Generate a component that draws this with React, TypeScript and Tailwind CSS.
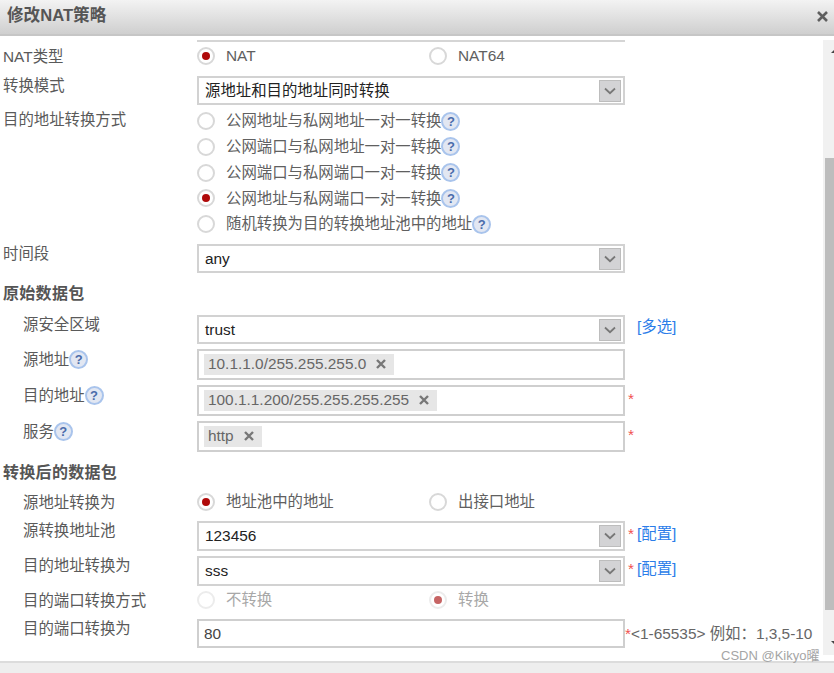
import type { ReactNode } from 'react';

function Help() {
  return (
    <span className="inline-flex h-[19px] w-[19px] shrink-0 items-center justify-center rounded-full border-2 border-[#a9c4ec] bg-[#e2e7f2] text-[13px] font-bold leading-none text-[#4a6cab]">
      ?
    </span>
  );
}

function Radio({ label, checked, disabled, help }: { label: string; checked?: boolean; disabled?: boolean; help?: boolean }) {
  return (
    <div className="flex h-6 items-center">
      <span className={`flex h-[18px] w-[18px] shrink-0 items-center justify-center rounded-full border-2 bg-white ${disabled ? 'border-[#ececec]' : 'border-[#d8d8d8]'}`}>
        {checked && <span className={`h-2 w-2 rounded-full ${disabled ? 'bg-[#c66464]' : 'bg-[#b00a0a]'}`} />}
      </span>
      <span className={`ml-[11px] ${disabled ? 'text-[#a8a8a8]' : 'text-[#606060]'}`}>{label}</span>
      {help && <Help />}
    </div>
  );
}

function Label({ text, sub, help }: { text: string; sub?: boolean; help?: boolean }) {
  return (
    <div className={`mt-px flex w-[197px] shrink-0 items-center leading-[18px] text-[#5a5a5a] ${sub ? 'pl-[23px]' : 'pl-[3px]'}`}>
      {text}
      {help && <Help />}
    </div>
  );
}

function Select({ value, className }: { value: string; className: string }) {
  return (
    <div className={`flex w-[428px] items-center justify-between border-2 border-[#d2d2d2] pl-[6px] pr-[2px] text-[#222] ${className}`}>
      <span>{value}</span>
      <span className="flex h-[22px] w-[22px] items-center justify-center border border-[#bdbdbd] bg-[#d3d3d5]">
        <svg width="12" height="8" viewBox="0 0 12 8" fill="none" stroke="#777" strokeWidth="1.8">
          <path d="M1 1.5 6 6.2 11 1.5" />
        </svg>
      </span>
    </div>
  );
}

function TagBox({ tag }: { tag: string }) {
  return (
    <div className="flex h-[31px] w-[428px] items-center border-2 border-[#cfcfcf] pl-[5px]">
      <span className="-mt-px flex h-[21px] items-center bg-[#e6e6e6] px-1 text-[#666]">
        {tag}
        <svg className="ml-[10px] mr-[4px]" width="10" height="10" viewBox="0 0 10 10" stroke="#777" strokeWidth="2.4">
          <path d="M1 1 9 9M9 1 1 9" />
        </svg>
      </span>
    </div>
  );
}

function Row({ children, className }: { children: ReactNode; className: string }) {
  return <div className={`flex items-start ${className}`}>{children}</div>;
}

function Star() {
  return <span className="ml-[3px] text-[#f0524f]">*</span>;
}

function Link({ text }: { text: string }) {
  return <span className="ml-[3px] text-[#2b7de9]">{text}</span>;
}

export default function App() {
  return (
    <div className="relative flex h-[673px] w-[834px] flex-col overflow-hidden bg-white font-['Liberation_Sans','Noto_Sans_CJK_SC',sans-serif] text-[15.4px]">
      {/* Title bar */}
      <div className="flex h-[36px] shrink-0 items-center justify-between border-b-2 border-[#c6c6c6] bg-gradient-to-b from-[#f3f3f3] to-[#cfcfcf] pb-[2px] pl-[7px] pr-[6px]">
        <span className="text-[16.6px] font-bold text-[#555]">修改NAT策略</span>
        <svg width="11" height="11" viewBox="0 0 11 11" stroke="#5f5f5f" strokeWidth="2.6">
          <path d="M1 1 10 10M10 1 1 10" />
        </svg>
      </div>

      <div className="flex min-h-0 flex-1">
        {/* Form */}
        <div className="min-w-0 flex-1">
          <div className="ml-[197px] mt-[4px] h-[2px] w-[428px] bg-[#d5d5d5]" />

          <Row className="mt-[2px] h-6 !items-center">
            <Label text="NAT类型" />
            <div className="w-[232px]"><Radio label="NAT" checked /></div>
            <Radio label="NAT64" />
          </Row>

          <Row className="mt-2">
            <Label text="转换模式" />
            <Select value="源地址和目的地址同时转换" className="h-[29px]" />
          </Row>

          <Row className="mt-1">
            <div className="mt-px"><Label text="目的地址转换方式" /></div>
            <div className="flex flex-col gap-[1.75px]">
              <Radio label="公网地址与私网地址一对一转换" help />
              <Radio label="公网端口与私网地址一对一转换" help />
              <Radio label="公网端口与私网端口一对一转换" help />
              <Radio label="公网地址与私网端口一对一转换" checked help />
              <Radio label="随机转换为目的转换地址池中的地址" help />
            </div>
          </Row>

          <Row className="mt-2">
            <Label text="时间段" />
            <Select value="any" className="h-[29px]" />
          </Row>

          <div className="mt-[10px] h-5 pl-[3px] text-[16px] font-bold leading-[22px] tracking-[0.3px] text-[#555]">原始数据包</div>

          <Row className="mt-3">
            <Label text="源安全区域" sub />
            <Select value="trust" className="h-[29px]" />
            <span className="ml-3 text-[#2b7de9]">[多选]</span>
          </Row>

          <Row className="mt-[5px]">
            <Label text="源地址" sub help />
            <TagBox tag="10.1.1.0/255.255.255.0" />
          </Row>

          <Row className="mt-[5px]">
            <Label text="目的地址" sub help />
            <TagBox tag="100.1.1.200/255.255.255.255" />
            <span className="mt-[2px]"><Star /></span>
          </Row>

          <Row className="mt-[5px]">
            <Label text="服务" sub help />
            <TagBox tag="http" />
            <span className="mt-[2px]"><Star /></span>
          </Row>

          <div className="mt-[10px] h-5 pl-[3px] text-[16px] font-bold leading-[22px] tracking-[0.3px] text-[#555]">转换后的数据包</div>

          <Row className="mt-2 h-6 !items-center">
            <Label text="源地址转换为" sub />
            <div className="w-[232px]"><Radio label="地址池中的地址" checked /></div>
            <Radio label="出接口地址" />
          </Row>

          <Row className="mt-[7px]">
            <Label text="源转换地址池" sub />
            <Select value="123456" className="h-[30px]" />
            <span className="mt-[1px]"><Star /><Link text="[配置]" /></span>
          </Row>

          <Row className="mt-[5px]">
            <Label text="目的地址转换为" sub />
            <Select value="sss" className="h-[30px]" />
            <span className="mt-[1px]"><Star /><Link text="[配置]" /></span>
          </Row>

          <Row className="mt-[2px] h-6 !items-center">
            <Label text="目的端口转换方式" sub />
            <div className="w-[232px]"><Radio label="不转换" disabled /></div>
            <Radio label="转换" checked disabled />
          </Row>

          <Row className="mt-[7px]">
            <Label text="目的端口转换为" sub />
            <div className="flex h-[29px] w-[428px] items-center border-2 border-[#cfcfcf] pl-[5px] text-[#444]">80</div>
            <span className="mt-[3px] whitespace-nowrap text-[#666]"><span className="text-[#f0524f]">*</span>&lt;1-65535&gt; 例如：1,3,5-10</span>
          </Row>
        </div>

        {/* Scrollbar */}
        <div className="relative mt-[4px] flex h-[615px] w-[11px] shrink-0 flex-col overflow-hidden bg-[#f1f1f1]">
          <span className="absolute left-[8px] top-[8px] h-0 w-0 border-x-[5px] border-b-[5px] border-x-transparent border-b-[#444]" />
          <div className="ml-[2px] mt-[118px] h-[452px] bg-[#bdbdbd]" />
          <span className="absolute left-[8px] top-[601px] h-0 w-0 border-x-[5px] border-t-[5px] border-x-transparent border-t-[#444]" />
        </div>
      </div>

      {/* Footer */}
      <div className="h-[12px] shrink-0 border-t-2 border-[#dcdcdc] bg-[#eeeeee]" />

      <span className="absolute left-[721px] top-[647px] text-[13px] leading-[18px] text-[#a5a5a5]">CSDN @Kikyo曜</span>
    </div>
  );
}
